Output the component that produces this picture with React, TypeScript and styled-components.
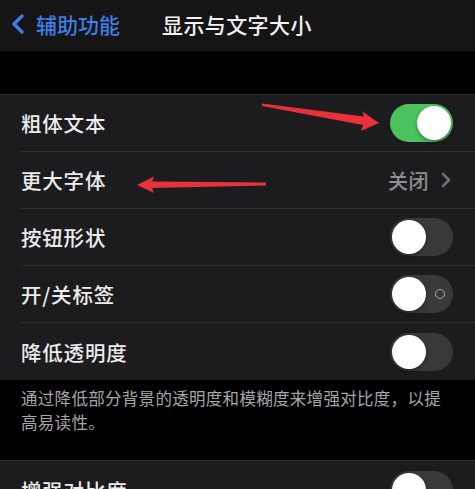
import React from "react";
import styled, { createGlobalStyle } from "styled-components";

const Global = createGlobalStyle`
  html, body { margin: 0; padding: 0; background: #000; }
  body { font-family: "Noto Sans CJK SC", "Noto Sans", sans-serif; }
  #root { width: 475px; height: 489px; overflow: hidden; position: relative; }
`;

const Page = styled.div`
  position: relative;
  width: 475px;
  height: 489px;
  background: #000;
  overflow: hidden;
`;

const NavBar = styled.div`
  height: 51px;
  background: #151515;
  display: flex;
  align-items: center;
  padding: 0 0 3px 10px;
  box-sizing: border-box;
  color: #fff;
`;

const Back = styled.div`
  display: flex;
  align-items: center;
  gap: 10px;
  color: #3d7ee8;
  font-size: 21px;
  font-weight: 500;
  width: 152px;
`;

const Title = styled.div`
  font-size: 21px;
  font-weight: 500;
  color: #f2f2f2;
  letter-spacing: 0.4px;
`;

const Spacer = styled.div<{ h: number }>`
  height: ${(p) => p.h}px;
`;

const Group = styled.div`
  background: #1c1c1e;
  border-top: 1px solid #2c2c2e;
`;

const Row = styled.div<{ last?: boolean }>`
  height: 57px;
  display: flex;
  align-items: center;
  margin-left: 21px;
  padding-right: 22px;
  box-sizing: border-box;
  border-bottom: ${(p) => (p.last ? "none" : "1px solid #303032")};
`;

const Label = styled.div`
  flex: 1;
  font-size: 20.5px;
  font-weight: 500;
  color: #ececec;
  letter-spacing: 0.8px;
`;

const Value = styled.div`
  display: flex;
  align-items: center;
  gap: 12px;
  font-size: 20px;
  font-weight: 500;
  color: #8e8e93;
  letter-spacing: 0.5px;
  padding-right: 2px;
`;

const Track = styled.div<{ on?: boolean }>`
  position: relative;
  width: 63px;
  height: 38px;
  border-radius: 19px;
  background: ${(p) => (p.on ? "#4cc25e" : "#39393c")};
  flex: none;
`;

const Knob = styled.div<{ on?: boolean }>`
  position: absolute;
  top: 2px;
  left: ${(p) => (p.on ? "27px" : "2px")};
  width: 34px;
  height: 34px;
  border-radius: 50%;
  background: #fff;
  box-shadow: 0 2px 4px rgba(0, 0, 0, 0.35);
`;

const OffMark = styled.div`
  position: absolute;
  right: 8px;
  top: 14px;
  width: 8px;
  height: 8px;
  border-radius: 50%;
  border: 1.5px solid #a8a8ac;
`;

const Footer = styled.div`
  padding: 6px 30px 26px 21px;
  font-size: 16.5px;
  line-height: 24px;
  color: #a6a6aa;
  letter-spacing: 0.3px;
  height: 80px;
  box-sizing: border-box;
`;

const Overlay = styled.svg`
  position: absolute;
  left: 0;
  top: 0;
  pointer-events: none;
`;

const Toggle = ({ on, mark }: { on?: boolean; mark?: boolean }) => (
  <Track on={on}>
    {mark && !on && <OffMark />}
    <Knob on={on} />
  </Track>
);

export default function App() {
  return (
    <Page>
      <Global />
      <NavBar>
        <Back>
          <svg width="16" height="20" viewBox="0 0 16 20">
            <path d="M12 2 L4 10 L12 18" fill="none" stroke="#3d7ee8" strokeWidth="3.4" strokeLinecap="round" strokeLinejoin="round" />
          </svg>
          <span>辅助功能</span>
        </Back>
        <Title>显示与文字大小</Title>
      </NavBar>
      <Spacer h={43} />
      <Group>
        <Row>
          <Label>粗体文本</Label>
          <Toggle on />
        </Row>
        <Row>
          <Label>更大字体</Label>
          <Value>
            <span>关闭</span>
            <svg width="10" height="16" viewBox="0 0 10 16">
              <path d="M2 2 L8 8 L2 14" fill="none" stroke="#6e6e73" strokeWidth="2.6" strokeLinecap="round" strokeLinejoin="round" />
            </svg>
          </Value>
        </Row>
        <Row>
          <Label>按钮形状</Label>
          <Toggle />
        </Row>
        <Row>
          <Label>开/关标签</Label>
          <Toggle mark />
        </Row>
        <Row last>
          <Label>降低透明度</Label>
          <Toggle />
        </Row>
      </Group>
      <Footer>通过降低部分背景的透明度和模糊度来增强对比度，以提高易读性。</Footer>
      <Group>
        <Row last>
          <Label>增强对比度</Label>
          <Toggle />
        </Row>
      </Group>
      <Overlay width="475" height="489" viewBox="0 0 475 489">
        <polygon points="262,103.5 364,116.5 362,111 379,123 361,131 363,125 262,106" fill="#e8313b" />
        <polygon points="266,182.5 152,181.5 154,176.5 137,185 154,193 152,188 266,185.5" fill="#e8313b" />
      </Overlay>
    </Page>
  );
}
